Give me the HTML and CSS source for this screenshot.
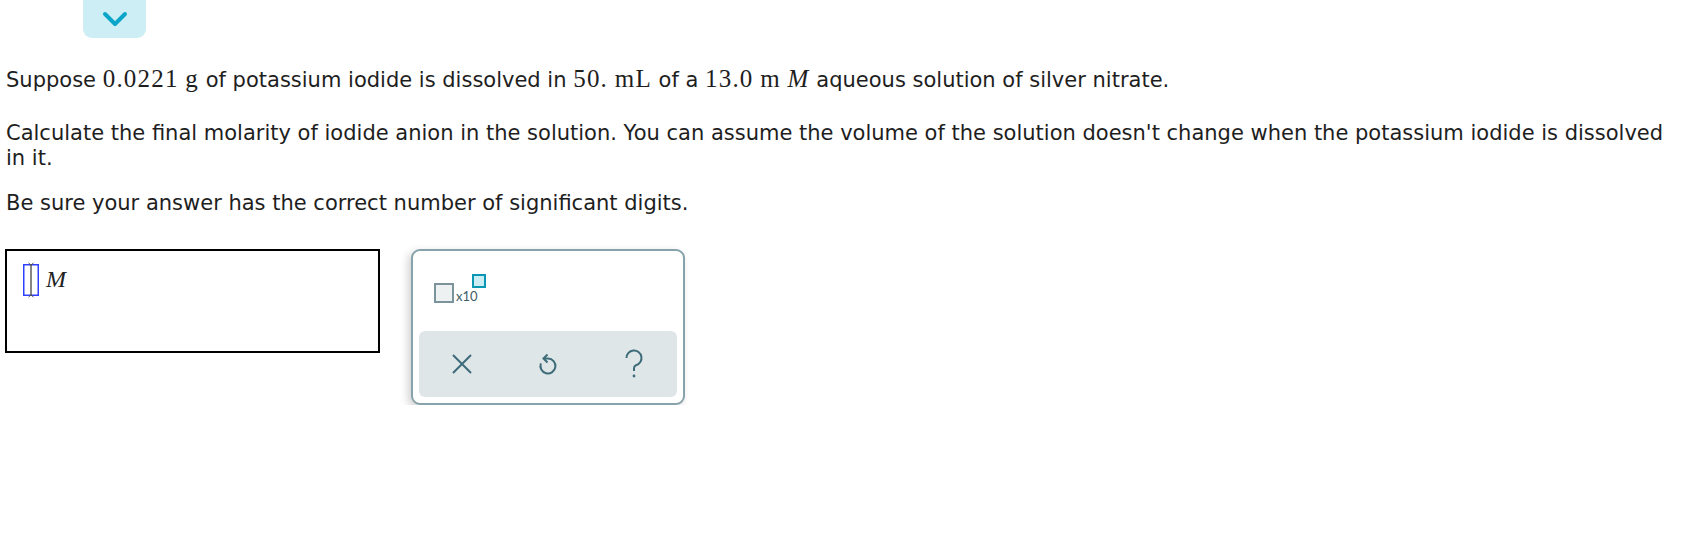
FILE: index.html
```html
<!DOCTYPE html>
<html>
<head>
<meta charset="utf-8">
<link rel="stylesheet" href="styles.css">
</head>
<body>
<div class="page">
  <div class="topbar">
    <div class="toggle">
      <svg width="26" height="16" viewBox="0 0 26 16"><polyline points="3,3 13,13 23,3" fill="none" stroke="#0aa5c9" stroke-width="4" stroke-linecap="round" stroke-linejoin="round"/></svg>
    </div>
  </div>
  <div class="question">
    <p class="p1">Suppose <span class="m">0.0221</span> <span class="m">g</span> of potassium iodide is dissolved in <span class="m">50.</span> <span class="m">mL</span> of a <span class="m">13.0</span> <span class="m">m</span> <span class="m mi">M</span> aqueous solution of silver nitrate.</p>
    <p class="p2">Calculate the final molarity of iodide anion in the solution. You can assume the volume of the solution doesn't change when the potassium iodide is dissolved in it.</p>
    <p class="p3">Be sure your answer has the correct number of significant digits.</p>
  </div>
  <div class="answer">
    <div class="answer-box">
      <svg class="cursor" width="18" height="36" viewBox="0 0 18 36">
        <rect x="1.75" y="2.75" width="14.5" height="30.5" fill="#fff" stroke="#3040ff" stroke-width="1.5"/>
        <line x1="9" y1="2" x2="9" y2="34" stroke="#333" stroke-width="1.2"/>
        <path d="M6.5 1 L9 3 L11.5 1 M6.5 35 L9 33 L11.5 35" fill="none" stroke="#555" stroke-width="1"/>
      </svg>
      <span class="unit">M</span>
    </div>
    <div class="keypad">
      <div class="keys">
        <div class="sci">
          <span class="sq"></span>
          <span class="x10">x10</span>
          <span class="sup"></span>
        </div>
      </div>
      <div class="actions">
        <div class="act">
          <svg width="22" height="22" viewBox="0 0 22 22"><path d="M2 2 L20 20 M20 2 L2 20" stroke="#3d6b79" stroke-width="2" fill="none"/></svg>
        </div>
        <div class="act">
          <svg width="24" height="28" viewBox="0 0 24 28"><path d="M7.5 8.5 H12 A7.5 7.5 0 1 1 4.9 13.4" fill="none" stroke="#3d6b79" stroke-width="2"/><polyline points="11.5,4.5 7.5,8.5 11.5,12.5" fill="none" stroke="#3d6b79" stroke-width="2"/></svg>
        </div>
        <div class="act">
          <svg width="22" height="30" viewBox="0 0 22 30"><path d="M3.5 9 A7.5 7.5 0 1 1 13 16.2 C11.6 16.8 11 17.8 11 19.5 V22" fill="none" stroke="#3d6b79" stroke-width="2"/><circle cx="11" cy="27" r="1.4" fill="#3d6b79"/></svg>
        </div>
      </div>
    </div>
  </div>
</div>
</body>
</html>
```
FILE: styles.css
```css
html, body {
  margin: 0;
  padding: 0;
  background: #fff;
}
.page {
  padding: 0 6px 0 5px;
  font-family: "DejaVu Sans", Verdana, sans-serif;
  color: #1e1e1e;
}
.topbar {
  display: flex;
  padding-left: 78px;
}
.toggle {
  width: 63px;
  height: 38px;
  background: #cdeef4;
  border-radius: 0 0 9px 9px;
  display: flex;
  align-items: center;
  justify-content: center;
}
.toggle svg {
  display: block;
}
.question {
  padding-top: 28px;
  padding-left: 1px;
  font-size: 21px;
  line-height: 25px;
}
.question p {
  margin: 0;
}
.p1 {
  margin-bottom: 28px !important;
}
.p2 {
  margin-bottom: 20px !important;
}
.m {
  font-family: "Liberation Serif", "Times New Roman", serif;
  font-size: 25px;
  letter-spacing: 1.2px;
}
.mi {
  font-style: italic;
}
.answer {
  display: flex;
  align-items: flex-start;
  gap: 31px;
  margin-top: 33px;
}
.answer-box {
  width: 375px;
  height: 104px;
  box-sizing: border-box;
  border: 2px solid #000;
  display: flex;
  align-items: flex-start;
  padding: 11px 0 0 15px;
  gap: 6px;
}
.cursor {
  display: block;
}
.unit {
  font-family: "Liberation Serif", "Times New Roman", serif;
  font-style: italic;
  font-size: 24px;
  line-height: 26px;
  margin-top: 4px;
  color: #222;
}
.keypad {
  width: 274px;
  height: 156px;
  box-sizing: border-box;
  border: 2px solid #87a2ab;
  border-radius: 9px;
  padding: 6px;
  box-shadow: -3px 3px 8px rgba(0, 0, 0, 0.18);
  display: flex;
  flex-direction: column;
  background: #fff;
}
.keys {
  height: 74px;
  padding: 17px 0 0 15px;
  box-sizing: border-box;
}
.sci {
  display: flex;
  align-items: flex-start;
  height: 29px;
}
.sq {
  width: 20px;
  height: 20px;
  box-sizing: border-box;
  border: 2px solid #7b949b;
  background: #eef1f2;
  margin-top: 9px;
}
.x10 {
  font-family: Lato, "Open Sans", sans-serif;
  font-size: 13px;
  line-height: 13px;
  color: #3d5c66;
  align-self: flex-end;
  margin-left: 2px;
  margin-bottom: 0;
}
.sup {
  width: 14px;
  height: 14px;
  box-sizing: border-box;
  border: 2px solid #0a97b4;
  background: #c9edf3;
  margin-left: -6px;
}
.actions {
  height: 66px;
  background: #dfe6e8;
  border-radius: 6px;
  display: grid;
  grid-template-columns: 1fr 1fr 1fr;
  align-items: center;
  justify-items: center;
}
.act svg {
  display: block;
}
```
